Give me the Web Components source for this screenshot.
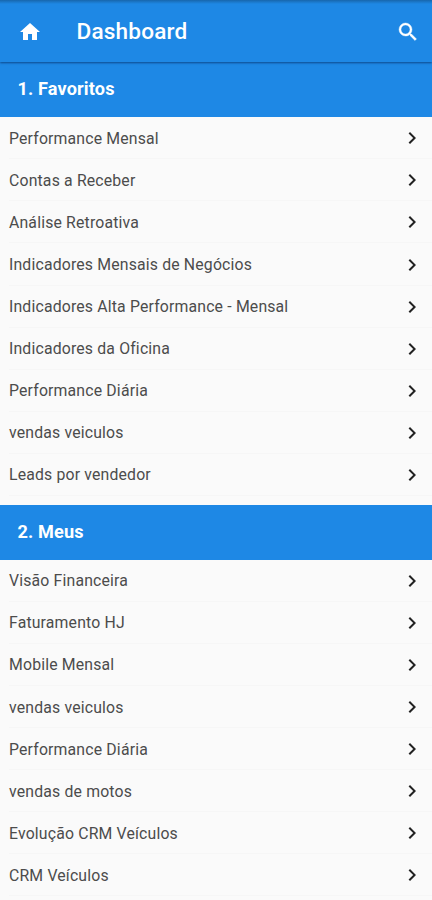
<!DOCTYPE html>
<html lang="pt-BR">
<head>
<meta charset="utf-8">
<title>Dashboard</title>
<style>
html, body { margin: 0; height: 100%; overflow: hidden; background: #fafafa; font-family: Roboto, "Liberation Sans", sans-serif; }
</style>
</head>
<body>
<dash-app></dash-app>
<script>
const define = (name, html) => customElements.define(name, class extends HTMLElement {
  constructor() {
    super();
    const template = document.createElement('template');
    template.innerHTML = html;
    this.attachShadow({ mode: 'open' }).append(template.content.cloneNode(true));
  }
});

define('app-bar', `
<style>
:host { display: flex; align-items: center; box-sizing: border-box; height: 62px; padding: 0 12.5px 0 18px; color: #fff; background: linear-gradient(#1766ac, #1b78ca 2px, #1e88e5 4px); box-shadow: 0 1px 2px rgba(0,30,80,.6); position: relative; z-index: 1; }
svg { width: 24px; height: 24px; fill: currentColor; flex: none; margin-top: 2px; }
.search { stroke: currentColor; stroke-width: .4; }
h1 { flex: 1; margin: 2px 0 0 34.5px; font-size: 22.6px; line-height: 28px; font-weight: 500; letter-spacing: .18px; }
</style>
<svg viewBox="0 0 24 24"><path d="M10 20v-6h4v6h5v-8h3L12 3 2 12h3v8z"/></svg>
<h1><slot></slot></h1>
<svg class="search" viewBox="0 0 24 24"><path d="M15.5 14h-.79l-.28-.27A6.47 6.47 0 0 0 16 9.5 6.5 6.5 0 1 0 9.5 16c1.61 0 3.09-.59 4.23-1.57l.27.28v.79l5 4.99L20.49 19l-4.99-5zm-6 0a4.5 4.5 0 1 1 0-9 4.5 4.5 0 0 1 0 9z"/></svg>`);

define('list-section', `
<style>
:host { display: block; padding-bottom: 8.7px; }
h2 { display: flex; align-items: center; box-sizing: border-box; height: 55px; margin: 0; padding: 0 0 var(--title-lift, 1px) 17.5px; background: #1e88e5; color: #fff; font-size: 18.1px; font-weight: 700; letter-spacing: .15px; }
</style>
<h2><slot name="title"></slot></h2>
<slot></slot>`);

define('list-row', `
<style>
:host { display: flex; align-items: center; justify-content: space-between; box-sizing: border-box; height: 42.1px; padding: 0 8px 0 9px; color: #4c4c4c; font-size: 15.8px; letter-spacing: .17px; background: linear-gradient(#f6f6f6, #f6f6f6) 9px 100% / 100% 1px no-repeat; }
svg { width: 24px; height: 24px; fill: #222; }
</style>
<span><slot></slot></span>
<svg viewBox="0 0 24 24"><path d="M8.59 16.59 13.17 12 8.59 7.41 10 6l6 6-6 6z"/></svg>`);

define('dash-app', `
<style>
:host { display: block; }
app-bar + list-section { --title-lift: 2.4px; padding-top: .2px; }
</style>
<app-bar>Dashboard</app-bar>
<list-section><span slot="title">1. Favoritos</span>
<list-row>Performance Mensal</list-row>
<list-row>Contas a Receber</list-row>
<list-row>Análise Retroativa</list-row>
<list-row>Indicadores Mensais de Negócios</list-row>
<list-row>Indicadores Alta Performance - Mensal</list-row>
<list-row>Indicadores da Oficina</list-row>
<list-row>Performance Diária</list-row>
<list-row>vendas veiculos</list-row>
<list-row>Leads por vendedor</list-row>
</list-section>
<list-section><span slot="title">2. Meus</span>
<list-row>Visão Financeira</list-row>
<list-row>Faturamento HJ</list-row>
<list-row>Mobile Mensal</list-row>
<list-row>vendas veiculos</list-row>
<list-row>Performance Diária</list-row>
<list-row>vendas de motos</list-row>
<list-row>Evolução CRM Veículos</list-row>
<list-row>CRM Veículos</list-row>
</list-section>`);
</script>
</body>
</html>
